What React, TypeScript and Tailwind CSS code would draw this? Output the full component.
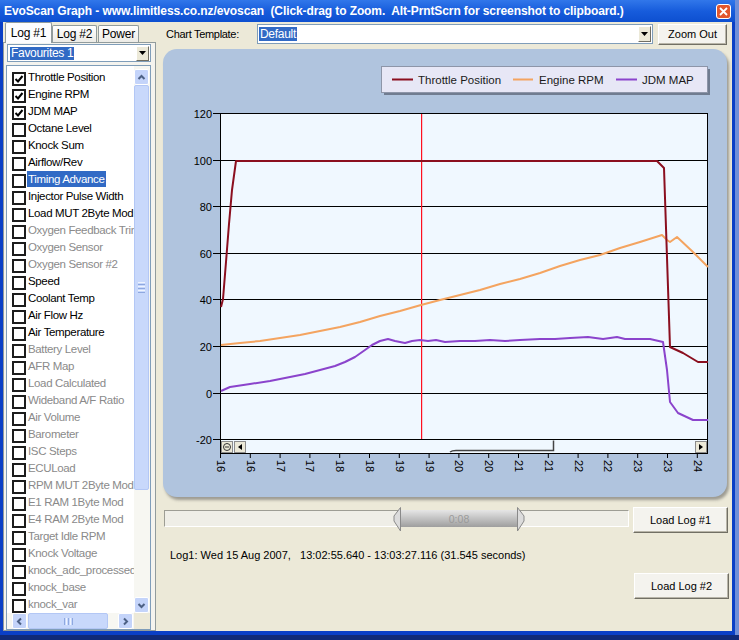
import React from "react";

type Item = { label: string; on?: boolean; dim?: boolean; sel?: boolean };

const items: Item[] = [
  { label: "Throttle Position", on: true },
  { label: "Engine RPM", on: true },
  { label: "JDM MAP", on: true },
  { label: "Octane Level" },
  { label: "Knock Sum" },
  { label: "Airflow/Rev" },
  { label: "Timing Advance", sel: true },
  { label: "Injector Pulse Width" },
  { label: "Load MUT 2Byte Mod" },
  { label: "Oxygen Feedback Trim", dim: true },
  { label: "Oxygen Sensor", dim: true },
  { label: "Oxygen Sensor #2", dim: true },
  { label: "Speed" },
  { label: "Coolant Temp" },
  { label: "Air Flow Hz" },
  { label: "Air Temperature" },
  { label: "Battery Level", dim: true },
  { label: "AFR Map", dim: true },
  { label: "Load Calculated", dim: true },
  { label: "Wideband A/F Ratio", dim: true },
  { label: "Air Volume", dim: true },
  { label: "Barometer", dim: true },
  { label: "ISC Steps", dim: true },
  { label: "ECULoad", dim: true },
  { label: "RPM MUT 2Byte Mod", dim: true },
  { label: "E1 RAM 1Byte Mod", dim: true },
  { label: "E4 RAM 2Byte Mod", dim: true },
  { label: "Target Idle RPM", dim: true },
  { label: "Knock Voltage", dim: true },
  { label: "knock_adc_processed", dim: true },
  { label: "knock_base", dim: true },
  { label: "knock_var", dim: true },
];

const gridY = [113.5, 160.5, 206.5, 253.5, 299.5, 346.5, 393.5, 439.5];
const yLabels = ["120", "100", "80", "60", "40", "20", "0", "-20"];
const xLabels = ["16", "16", "17", "17", "18", "18", "19", "19", "20", "20", "21", "21", "22", "22", "23", "23", "24"];

const throttle =
  "221,307 223,299 226,262 229,224 232,190 236,161 657,161 664,168 670,347 683,353 698,362 708,362";
const rpm =
  "221,345 240,343 260,341 280,338 300,335 320,331 340,327 360,322 380,316 400,311 421,305 440,300 460,295 480,290 500,284 520,279 540,273 560,266 580,260 600,255 620,248 640,242 662,235 667,240 670,242 677,237 693,252 708,267";
const jdm =
  "221,391 230,387 250,384 270,381 290,377 305,374 320,370 335,366 345,362 355,357 365,350 372,345 380,341 388,339 395,341 405,343 412,341 420,340 428,341 436,340 445,342 460,341 475,341 490,340 505,341 520,340 540,339 555,339 570,338 588,337 603,339 617,337 625,339 650,339 663,342 667,370 670,402 678,413 693,420 708,420";

const Arrow = ({ dir }: { dir: "up" | "down" | "left" | "right" }) => {
  const d = {
    up: "M1.5 6 L4.5 3 L7.5 6",
    down: "M1.5 3 L4.5 6 L7.5 3",
    left: "M6 1.5 L3 4.5 L6 7.5",
    right: "M3 1.5 L6 4.5 L3 7.5",
  }[dir];
  return (
    <svg width="9" height="9" viewBox="0 0 9 9">
      <path d={d} fill="none" stroke="#4d6185" strokeWidth="2" />
    </svg>
  );
};

const DropBtn = () => (
  <div className="flex h-full w-[13px] items-center justify-center border border-t-white border-l-white border-r-[#716f64] border-b-[#716f64] bg-[#ece9d8]">
    <svg width="7" height="4" viewBox="0 0 7 4">
      <path d="M0 0 H7 L3.5 4 Z" fill="#000" />
    </svg>
  </div>
);

function ListRow({ item }: { item: Item }) {
  return (
    <div className="flex h-[17px] items-start whitespace-nowrap pl-[5px]">
      <span className="mt-[4px] flex h-[14px] w-[14px] shrink-0 items-center justify-center border-2 border-[#1c1c1c] bg-white">
        {item.on && (
          <svg width="10" height="10" viewBox="0 0 10 10">
            <path d="M1.5 5 L4 7.5 L8.5 2" fill="none" stroke="#000" strokeWidth="2" />
          </svg>
        )}
      </span>
      <span
        className={`ml-[1px] mt-[1px] px-[1px] text-[11.5px] leading-[16px] tracking-[-0.35px] ${
          item.sel ? "bg-[#316ac5] text-white" : item.dim ? "text-[#8a8a8a]" : "text-black"
        }`}
      >
        {item.label}
      </span>
    </div>
  );
}

function LeftPanel() {
  return (
    <div className="flex w-[153px] flex-col">
      <div className="flex h-[20px] items-end pl-[2px] text-[12px] tracking-[-0.2px]">
        <div className="relative z-10 -mb-px flex h-[21px] w-[47px] items-center justify-center rounded-t-[2px] border border-b-0 border-[#919b9c] bg-[#fcfcfe]">
          Log #1
        </div>
        <div className="flex h-[17px] w-[45px] items-center justify-center rounded-t-[2px] border border-b-0 border-[#919b9c] bg-linear-to-b from-white to-[#ecebe6]">
          Log #2
        </div>
        <div className="ml-px flex h-[17px] w-[41px] items-center justify-center rounded-t-[2px] border border-b-0 border-[#919b9c] bg-linear-to-b from-white to-[#ecebe6]">
          Power
        </div>
      </div>
      <div className="flex flex-1 flex-col border border-[#919b9c] bg-[#f4f3ee]">
        <div className="ml-[3px] mt-px flex h-[18px] w-[144px] items-center border border-[#7f9db9] bg-white pl-[2px] pr-px">
          <span className="bg-[#316ac5] px-px text-[12px] leading-[13px] tracking-[-0.3px] text-white">
            Favourites 1
          </span>
          <div className="ml-auto h-[15px]">
            <DropBtn />
          </div>
        </div>
        <div className="ml-[2px] mt-[3px] grid h-[565px] w-[145px] grid-cols-[1fr_16px] grid-rows-[1fr_16px] border border-[#7f9db9] bg-white">
          <div className="overflow-hidden pt-[2px]">
            {items.map((it) => (
              <ListRow key={it.label} item={it} />
            ))}
          </div>
          <div className="flex flex-col bg-[#f7f7f2] pr-px">
            <div className="mt-[3px] flex h-[16px] items-center justify-center rounded-[2px] border border-white bg-[#c4d4fa]">
              <Arrow dir="up" />
            </div>
            <div className="flex h-[405px] items-center justify-center rounded-[2px] border border-[#b3c7f5] bg-[#c8d8fb]">
              <div className="flex flex-col gap-px">
                <div className="h-px w-[7px] bg-[#eef3fe]" />
                <div className="h-px w-[7px] bg-[#8ea8e0]" />
                <div className="h-px w-[7px] bg-[#eef3fe]" />
                <div className="h-px w-[7px] bg-[#8ea8e0]" />
                <div className="h-px w-[7px] bg-[#eef3fe]" />
                <div className="h-px w-[7px] bg-[#8ea8e0]" />
              </div>
            </div>
            <div className="flex-1" />
            <div className="flex h-[16px] items-center justify-center rounded-[2px] border border-white bg-[#c4d4fa]">
              <Arrow dir="down" />
            </div>
          </div>
          <div className="flex items-stretch bg-[#f7f7f2] pl-[5px] pr-px">
            <div className="flex w-[15px] items-center justify-center rounded-[2px] border border-white bg-[#c4d4fa]">
              <Arrow dir="left" />
            </div>
            <div className="ml-px flex w-[80px] items-center justify-center gap-px rounded-[2px] border border-[#b3c7f5] bg-[#c8d8fb]">
              <div className="h-[7px] w-px bg-[#8ea8e0]" />
              <div className="h-[7px] w-px bg-[#eef3fe]" />
              <div className="h-[7px] w-px bg-[#8ea8e0]" />
              <div className="h-[7px] w-px bg-[#eef3fe]" />
              <div className="h-[7px] w-px bg-[#8ea8e0]" />
            </div>
            <div className="flex-1" />
            <div className="flex w-[15px] items-center justify-center rounded-[2px] border border-white bg-[#c4d4fa]">
              <Arrow dir="right" />
            </div>
          </div>
          <div className="bg-[#ece9d8]" />
        </div>
      </div>
    </div>
  );
}

function Chart() {
  const font = "'Liberation Sans', Arial, sans-serif";
  return (
    <svg width={564} height={448} viewBox="163 49 564 448" className="block" fontFamily={font}>
      <rect x={384} y={69} width={326} height={26} fill="#707c90" />
      <rect x={381.5} y={66.5} width={326} height={26} fill="#e7e7f6" stroke="#8d95a8" />
      <line x1={392} x2={413} y1={79.5} y2={79.5} stroke="#8b0f1f" strokeWidth={2} />
      <text x={418} y={83.5} fontSize={11.5} fill="#1a1a1a">Throttle Position</text>
      <line x1={513} x2={533} y1={79.5} y2={79.5} stroke="#f4a460" strokeWidth={2} />
      <text x={539} y={83.5} fontSize={11.5} fill="#1a1a1a">Engine RPM</text>
      <line x1={616} x2={637} y1={79.5} y2={79.5} stroke="#8b44cc" strokeWidth={2} />
      <text x={642} y={83.5} fontSize={11.5} fill="#1a1a1a">JDM MAP</text>

      <rect x={220.5} y={113.5} width={487} height={340} fill="#f0f8ff" stroke="#000" />
      {gridY.map((y, i) => (
        <g key={i}>
          <line x1={213} x2={708} y1={y} y2={y} stroke="#000" />
          <text x={212} y={y + 4} fontSize={11} textAnchor="end" fill="#000">
            {yLabels[i]}
          </text>
        </g>
      ))}
      {xLabels.map((l, i) => {
        const x = 220.5 + i * 29.8;
        return (
          <g key={i}>
            <line x1={x} x2={x} y1={453.5} y2={458} stroke="#000" />
            <text transform={`translate(${x - 3.5},460) rotate(90)`} fontSize={11} fill="#000">
              {l}
            </text>
          </g>
        );
      })}

      <rect x={421} y={114} width={1.2} height={325} fill="#ff1020" />
      <polyline points={rpm} fill="none" stroke="#f4a460" strokeWidth={2} strokeLinejoin="round" />
      <polyline points={jdm} fill="none" stroke="#8b44cc" strokeWidth={2} strokeLinejoin="round" />
      <polyline points={throttle} fill="none" stroke="#8b0f1f" strokeWidth={2} strokeLinejoin="round" />

      <rect x={221.5} y={441.5} width={11} height={11} fill="#ece9d8" stroke="#8c8c8c" />
      <circle cx={227} cy={447} r={3.5} fill="none" stroke="#333" />
      <line x1={225} x2={229} y1={447} y2={447} stroke="#333" />
      <rect x={234.5} y={441.5} width={11} height={11} fill="#ece9d8" stroke="#8c8c8c" />
      <path d="M238 447 L242 444 L242 450 Z" fill="#000" />
      <path d="M450 452 Q452 450.5 456 450.5 H553.5 V440.5" fill="none" stroke="#444" strokeWidth={1.5} />
      <rect x={695.5} y={441.5} width={11} height={11} fill="#ece9d8" stroke="#8c8c8c" />
      <path d="M703 447 L699 444 L699 450 Z" fill="#000" />
    </svg>
  );
}

const btn =
  "flex items-center justify-center border border-t-white border-l-white border-r-[#716f64] border-b-[#716f64] bg-[#f4f3ee] text-[11px] shadow-[inset_-1px_-1px_0_#b8b5a8]";

function RightPanel() {
  return (
    <div className="flex flex-1 flex-col">
      <div className="flex h-[23px] items-start pl-[10px] pt-[2px]">
        <span className="w-[91px] text-[11px] leading-[20px] tracking-[-0.3px]">Chart Template:</span>
        <div className="flex h-[20px] w-[396px] items-center border border-[#7f9db9] bg-white pl-px pr-px">
          <span className="bg-[#316ac5] px-px text-[12px] leading-[14px] tracking-[-0.3px] text-white">Default</span>
          <div className="ml-auto h-[16px]">
            <DropBtn />
          </div>
        </div>
        <div className={`${btn} ml-[5px] h-[21px] w-[69px]`}>Zoom Out</div>
      </div>

      <div className="ml-[7px] mt-[4px] h-[448px] w-[564px] overflow-hidden rounded-[14px] bg-[#b0c4de] shadow-[2px_3px_3px_rgba(60,60,60,0.45)]">
        <Chart />
      </div>

      <div className="mt-[10px] flex items-start">
        <div className="relative ml-[8px] mt-[3px] h-[17px] w-[465px] border border-t-[#9d9d94] border-l-[#9d9d94] border-r-white border-b-white bg-[#efeee7]">
          <svg className="absolute left-[228px] top-[-4px]" width={132} height={25} viewBox="0 0 132 25">
            <defs>
              <linearGradient id="thumb" x1="0" y1="0" x2="0" y2="1">
                <stop offset="0" stopColor="#e6e6e6" />
                <stop offset="0.5" stopColor="#c2c2c2" />
                <stop offset="1" stopColor="#9e9e9e" />
              </linearGradient>
            </defs>
            <rect x={7} y={3} width={119} height={17} fill="url(#thumb)" />
            <path d="M7.5 0.5 L1 9 V14 L7.5 24 Z" fill="#dcdcdc" stroke="#8a8a8a" />
            <path d="M124.5 0.5 L131 9 V14 L124.5 24 Z" fill="#dcdcdc" stroke="#8a8a8a" />
            <text x={66} y={15.5} fontSize={10.5} textAnchor="middle" fill="#9a9a9a" fontFamily="'Liberation Sans', Arial, sans-serif">
              0:08
            </text>
          </svg>
        </div>
        <div className={`${btn} ml-[4px] h-[26px] w-[95px]`}>Load Log #1</div>
      </div>

      <div className="ml-[14px] mt-[15px] whitespace-pre text-[11px] leading-[15px]">
        Log1: Wed 15 Aug 2007,   13:02:55.640 - 13:03:27.116 (31.545 seconds)
      </div>

      <div className={`${btn} mr-[3px] mt-[10px] h-[26px] w-[95px] self-end`}>Load Log #2</div>
    </div>
  );
}

export default function App() {
  return (
    <div className="relative h-[640px] w-[739px] overflow-hidden bg-[#6f8fd8] font-['Liberation_Sans',Arial,sans-serif] text-black">
      <div className="flex h-[635px] w-[735px] flex-col bg-[#0a3fc6]">
        <div className="flex h-[22px] items-center bg-linear-to-b from-[#3177ea] via-[#175cdc] to-[#0d4fd0] pl-[4px] pr-[4px]">
          <span className="whitespace-pre text-[12px] font-bold tracking-[-0.1px] text-white">
            EvoScan Graph - www.limitless.co.nz/evoscan  (Click-drag to Zoom.  Alt-PrntScrn for screenshot to clipboard.)
          </span>
          <div className="ml-auto flex h-[15px] w-[15px] items-center justify-center rounded-[3px] border border-white bg-[#e2572d]">
            <svg width="9" height="9" viewBox="0 0 9 9">
              <path d="M1 1 L8 8 M8 1 L1 8" stroke="#fff" strokeWidth="1.8" />
            </svg>
          </div>
        </div>
        <div className="mx-[3px] flex h-[609px] bg-[#ece9d8]">
          <LeftPanel />
          <RightPanel />
        </div>
      </div>
      <div className="h-[5px] bg-[#102a78]" />
    </div>
  );
}
